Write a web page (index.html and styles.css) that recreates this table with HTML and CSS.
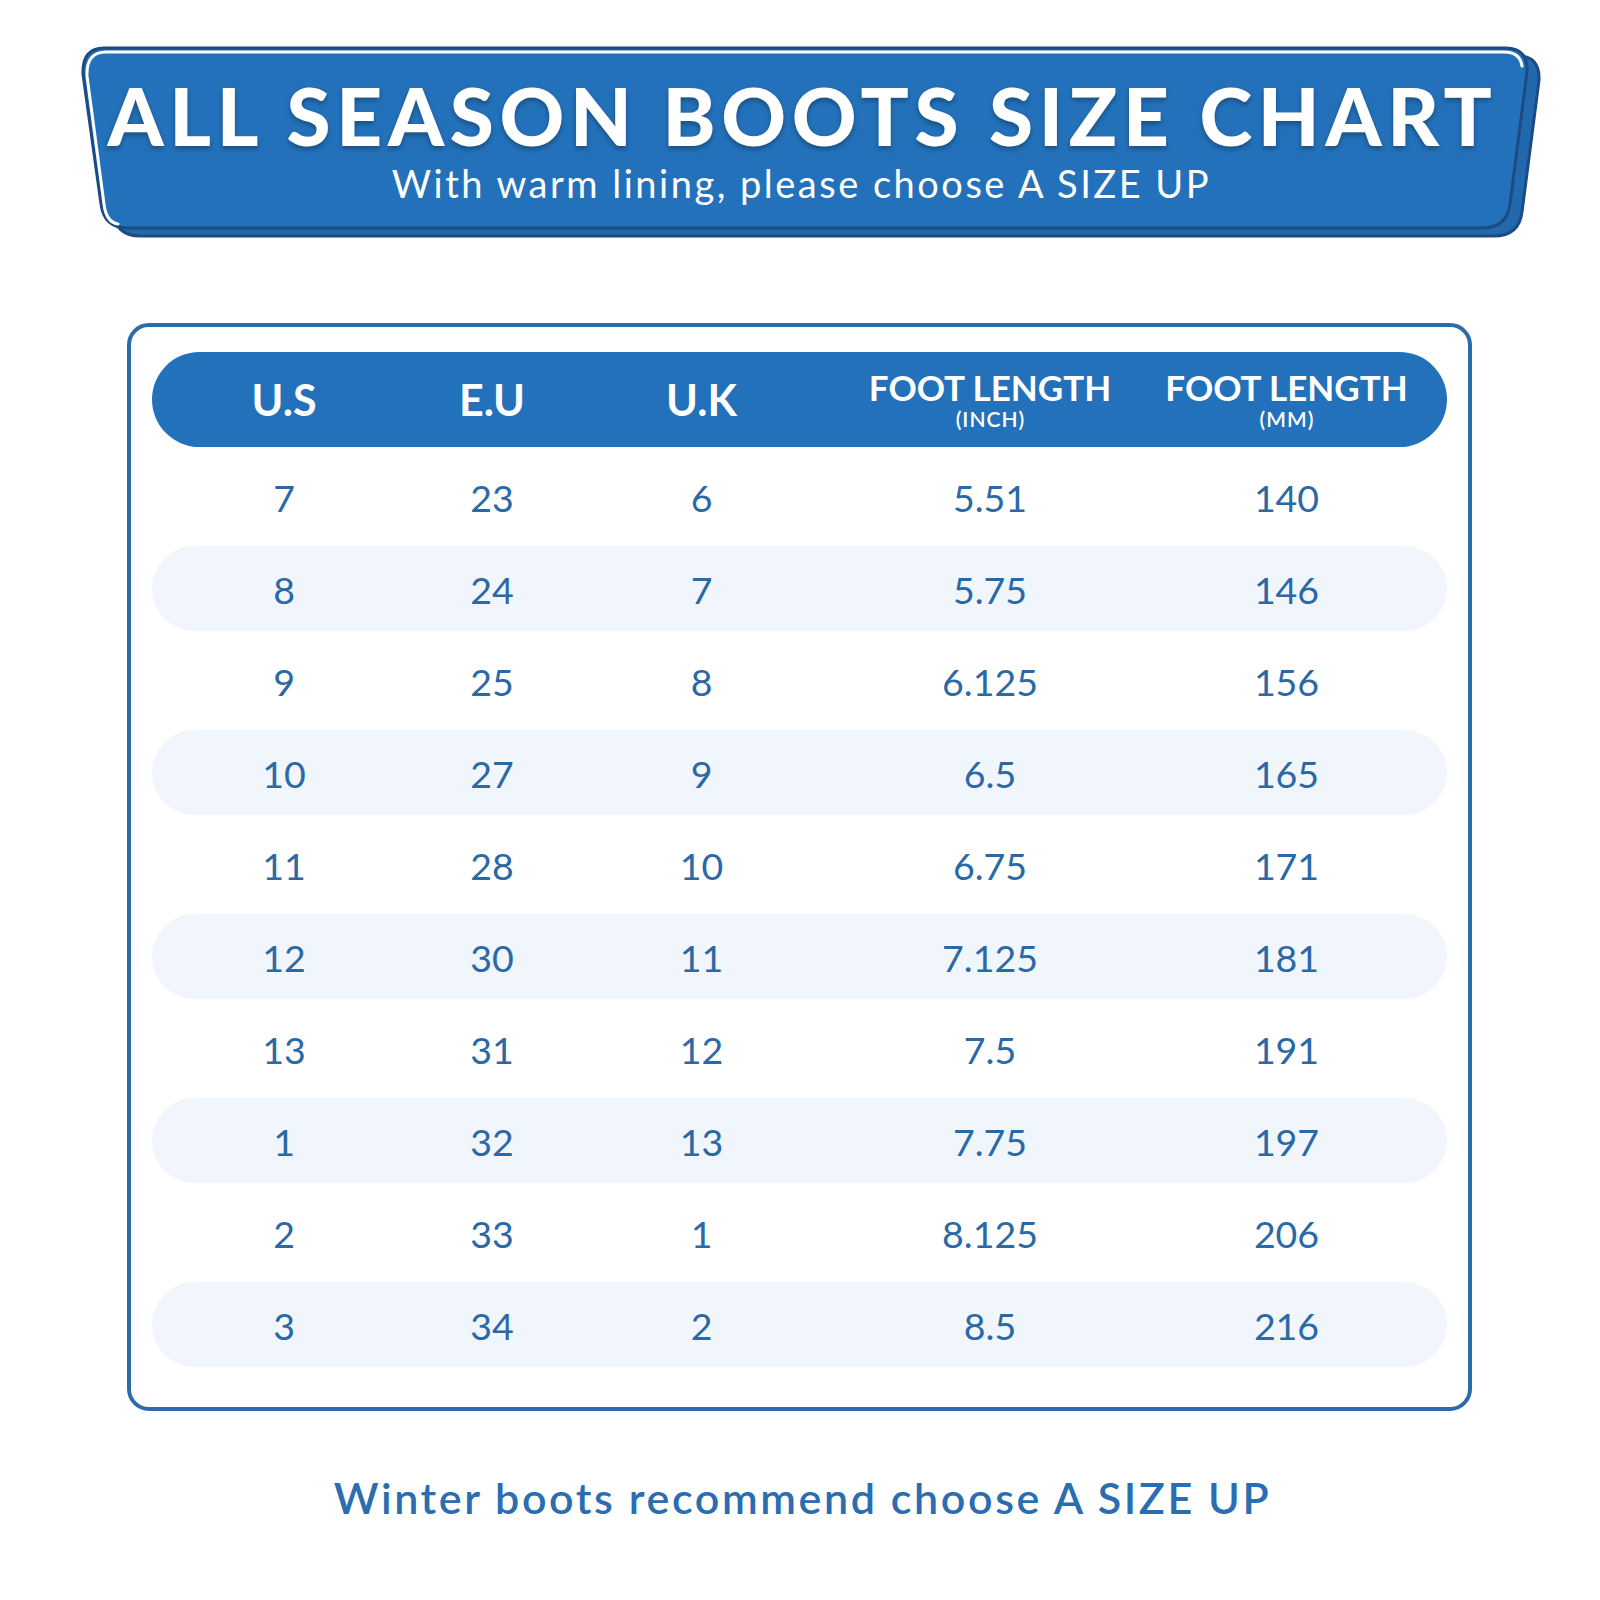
FILE: index.html
```html
<!DOCTYPE html>
<html lang="en">
<head>
<meta charset="utf-8">
<title>All Season Boots Size Chart</title>
<link rel="stylesheet" href="styles.css">
</head>
<body>
<div class="page">
  <header class="banner">
    <svg class="banner-bg" width="1600" height="260" viewBox="0 0 1600 260" aria-hidden="true">
      <path class="banner-back" d="M 104 48 L 1506 48 Q 1528 48 1527 72 L 1510 204 Q 1507 228 1482 228 L 128 228 Q 104 228 101 204 L 83 74 Q 82 48 104 48 Z" transform="translate(12 8)"/>
      <path class="banner-front" d="M 104 48 L 1506 48 Q 1528 48 1527 72 L 1510 204 Q 1507 228 1482 228 L 128 228 Q 104 228 101 204 L 83 74 Q 82 48 104 48 Z"/>
      <path class="banner-shine" d="M 118 224 Q 106 222 104 204 L 87 76 Q 86 52 106 52 L 1504 52 Q 1520 52 1522 66"/>
    </svg>
    <h1 class="title">ALL SEASON BOOTS SIZE CHART</h1>
    <p class="subtitle">With warm lining, please choose A SIZE UP</p>
  </header>

  <section class="card">
    <div class="thead">
      <div class="th">U.S</div>
      <div class="th">E.U</div>
      <div class="th">U.K</div>
      <div class="th th-two"><span class="th-main">FOOT LENGTH</span><span class="th-sub">(INCH)</span></div>
      <div class="th th-two"><span class="th-main">FOOT LENGTH</span><span class="th-sub">(MM)</span></div>
    </div>
    <div class="rows">
      <div class="row"><span>7</span><span>23</span><span>6</span><span>5.51</span><span>140</span></div>
      <div class="row alt"><span>8</span><span>24</span><span>7</span><span>5.75</span><span>146</span></div>
      <div class="row"><span>9</span><span>25</span><span>8</span><span>6.125</span><span>156</span></div>
      <div class="row alt"><span>10</span><span>27</span><span>9</span><span>6.5</span><span>165</span></div>
      <div class="row"><span>11</span><span>28</span><span>10</span><span>6.75</span><span>171</span></div>
      <div class="row alt"><span>12</span><span>30</span><span>11</span><span>7.125</span><span>181</span></div>
      <div class="row"><span>13</span><span>31</span><span>12</span><span>7.5</span><span>191</span></div>
      <div class="row alt"><span>1</span><span>32</span><span>13</span><span>7.75</span><span>197</span></div>
      <div class="row"><span>2</span><span>33</span><span>1</span><span>8.125</span><span>206</span></div>
      <div class="row alt"><span>3</span><span>34</span><span>2</span><span>8.5</span><span>216</span></div>
    </div>
  </section>

  <p class="note">Winter boots recommend choose A SIZE UP</p>
</div>
</body>
</html>
```

FILE: styles.css
```css
* { box-sizing: border-box; }

html, body {
  margin: 0;
  padding: 0;
  background: #ffffff;
}

body {
  font-family: "Lato", "Open Sans", "DejaVu Sans", sans-serif;
  color: #2a68a6;
}

.page {
  width: 1600px;
  height: 1600px;
  overflow: hidden;
}

/* ---------- Banner ---------- */
.banner {
  position: relative;
  height: 260px;
  padding-top: 75px;
  text-align: center;
}

.banner-bg {
  position: absolute;
  left: 0;
  top: 0;
  z-index: 0;
}

.banner-back {
  fill: #2268ad;
  stroke: #1b4b80;
  stroke-width: 3;
}

.banner-front {
  fill: #2371ba;
  stroke: #1b4b80;
  stroke-width: 3;
}

.banner-shine {
  fill: none;
  stroke: #ffffff;
  stroke-width: 3;
  stroke-linecap: round;
}

.title {
  position: relative;
  z-index: 1;
  margin: 0;
  padding-left: 5px;
  font-size: 80px;
  line-height: 80px;
  font-weight: 900;
  letter-spacing: 5.7px;
  color: #ffffff;
  text-shadow: 0 3px 5px rgba(0, 0, 0, 0.3);
}

.subtitle {
  position: relative;
  z-index: 1;
  margin: 9px 0 0;
  padding-left: 3px;
  font-size: 38px;
  line-height: 38px;
  font-weight: 400;
  letter-spacing: 2.5px;
  color: #ffffff;
}

/* ---------- Card ---------- */
.card {
  width: 1345px;
  margin: 63px 0 0 127px;
  border: 4px solid #2c6cab;
  border-radius: 22px;
  padding: 25px 21px 40px;
  background: #ffffff;
}

.thead,
.row {
  display: grid;
  grid-template-columns: 264px 152px 267px 310px 283px;
  align-items: center;
  justify-items: center;
}

.thead {
  height: 95px;
  border-radius: 48px;
  background: #2371ba;
  color: #ffffff;
}

.th {
  font-size: 43px;
  line-height: 1;
  font-weight: 700;
}

.th-two {
  display: flex;
  flex-direction: column;
  align-items: center;
}

.th-main {
  font-size: 35px;
  line-height: 35px;
  font-weight: 700;
}

.th-sub {
  margin-top: 3px;
  padding-left: 1px;
  font-size: 21px;
  line-height: 21px;
  font-weight: 600;
  letter-spacing: 1px;
}

.rows {
  display: flex;
  flex-direction: column;
  gap: 7px;
  margin-top: 7px;
}

.row {
  height: 85px;
  border-radius: 43px;
  padding-top: 3px;
  font-size: 37.5px;
  line-height: 1;
  font-weight: 400;
  color: #2a68a6;
}

.row.alt {
  background: #f0f6fc;
}

/* ---------- Note ---------- */
.note {
  margin: 65px 0 0;
  padding-left: 5px;
  text-align: center;
  font-size: 43px;
  line-height: 43px;
  font-weight: 600;
  letter-spacing: 2.6px;
  color: #2a6db0;
}
```
